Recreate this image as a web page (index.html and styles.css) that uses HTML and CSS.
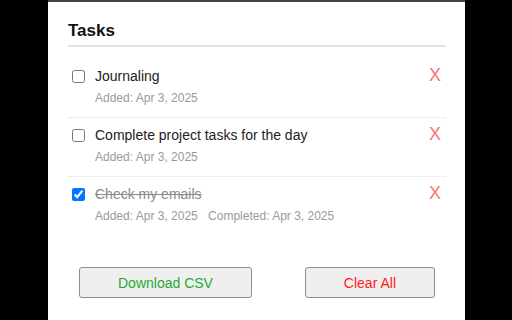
FILE: index.html
```html
<!DOCTYPE html>
<html lang="en">
<head>
  <meta charset="UTF-8" />
  <meta name="viewport" content="width=device-width, initial-scale=1" />
  <title>Tasks</title>
  <link rel="stylesheet" href="styles.css">
</head>
<body>
  <div class="panel">
    <h2 class="title">Tasks</h2>

    <ul class="task-list" id="taskList">
      <li class="task">
        <div class="task-row">
          <input type="checkbox" />
          <span class="task-text">Journaling</span>
          <button class="delete-btn" title="Delete">X</button>
        </div>
        <div class="task-meta">Added: Apr 3, 2025</div>
      </li>
      <li class="task">
        <div class="task-row">
          <input type="checkbox" />
          <span class="task-text">Complete project tasks for the day</span>
          <button class="delete-btn" title="Delete">X</button>
        </div>
        <div class="task-meta">Added: Apr 3, 2025</div>
      </li>
      <li class="task done">
        <div class="task-row">
          <input type="checkbox" checked />
          <span class="task-text">Check my emails</span>
          <button class="delete-btn" title="Delete">X</button>
        </div>
        <div class="task-meta">Added: Apr 3, 2025 <span class="completed">Completed: Apr 3, 2025</span></div>
      </li>
    </ul>

    <div class="actions">
      <button class="btn btn-csv">Download CSV</button>
      <button class="btn btn-clear">Clear All</button>
    </div>
  </div>
</body>
</html>
```

FILE: styles.css
```css
body, html {
  margin: 0; padding: 0; background: #000; height: 100%;
  font-family: 'Liberation Sans', Arial, sans-serif;
}
.panel {
  margin-left: 48px; width: 417px; box-sizing: border-box;
  min-height: 100%; background: #fff;
  border-top: 2px solid #41434c;
  padding: 19px 19px 20px 20px;
}
.title {
  margin: 0; font-size: 17px; line-height: 20px; font-weight: 700; color: #111;
  padding-bottom: 4px; border-bottom: 2px solid #e2e2e2;
}
.task-list {
  list-style: none; margin: 12px 0 0; padding: 0;
}
.task {
  padding: 7px 0 11px;
  border-bottom: 1px dotted #dcdcdc;
}
.task:last-child { border-bottom: none; }
.task-row {
  display: flex; align-items: center; height: 20px;
}
.task-row input {
  width: 13px; height: 13px; margin: 0 10px 0 4px;
}
.task-text {
  flex: 1; font-size: 14px; color: #222;
}
.done .task-text {
  color: #8a8a8a; text-decoration: line-through;
}
.delete-btn {
  background: none; border: none; padding: 0 5px 0 0; cursor: pointer;
  font-family: inherit; font-size: 18px; line-height: 20px; color: #ff7373;
  margin-top: -3px;
}
.task-meta {
  margin-top: 4px; padding-left: 27px;
  font-size: 12px; line-height: 16px; color: #9a9a9a;
}
.completed { margin-left: 7px; }
.actions {
  display: flex; justify-content: space-between;
  margin-top: 32px; padding: 0 11px;
}
.btn {
  font-family: inherit; font-size: 14px; height: 31px;
  padding: 0 38px; background: #efefef;
  border: 1px solid #8d8d8d; border-radius: 3px; cursor: pointer;
}
.btn-csv { color: #1faa2f; }
.btn-clear { color: #ff2020; }
```
